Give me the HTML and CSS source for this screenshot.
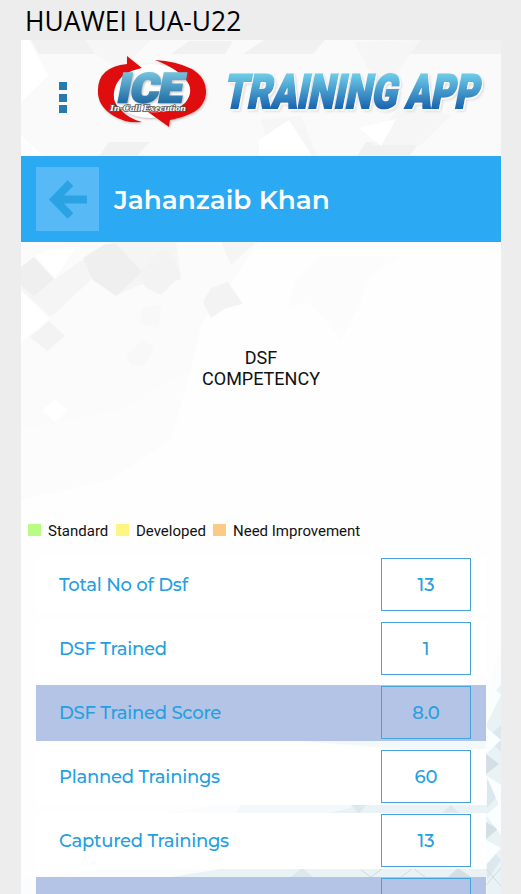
FILE: index.html
```html
<!DOCTYPE html>
<html lang="en">
<head>
<meta charset="utf-8">
<title>Training App</title>
<link rel="stylesheet" href="styles.css">
</head>
<body>
<h1 class="device">HUAWEI LUA-U22</h1>
<main class="screen">
  <svg class="backdrop" viewBox="0 0 480 854" aria-hidden="true">
    <rect width="480" height="854" fill="#fefefe"/>
    <path fill="#fafafa" d="M8 0H480V116H22L0 95V62L27 36Z"/>
    <path fill="#f1f1f1" d="M10 0H65L74 14H18ZM243 0H304L292 14H222ZM168 1H212L204 14H150ZM400 0H480V14H386ZM88 102H129L116 116H78ZM345 102H399L388 116H336Z"/>
    <path fill="#f6f6f6" d="M333 2L399 0L368 45L346 27ZM240 80L280 76L296 116H250ZM74 14L65 0H130L100 30ZM380 65L430 75L400 105L350 105Z"/>
    <path fill="#fff" d="M238 100L268 80L291 116H238ZM0 0H8L27 36L0 62ZM338 88L375 79L360 106Z"/>
    <path fill="#fbfbfb" d="M0 202H238L204 252L180 285L170 330L100 370L0 390Z"/>
    <path fill="#fcfcfc" d="M0 390L100 370L170 330L150 400L90 440L0 460ZM275 240L300 216H380L350 235L340 260L320 300L300 275L285 262L265 270Z"/>
    <path fill="#f5f5f5" d="M13 217L33 240L55 224L92 202H155L160 240L118 245L95 256L75 235L30 277L0 250ZM200 202H236L210 225Z"/>
    <path fill="#efefef" d="M0 227L13 217L33 239L13 256L0 246ZM62 218L84 204H95L121 232L95 256L72 240Z"/>
    <path fill="#f3f3f3" d="M9 297L28 281L44 296L26 311ZM182 262L190 248L207 242L222 264L205 268L190 278ZM120 232L140 210H147L160 235L140 255L124 247Z"/>
    <path fill="#f8f8f8" d="M105 317L122 300L133 308L123 325L112 326ZM122 268L140 264L138 288L118 283Z"/>
    <path fill="#fff" d="M0 250L28 279L0 302ZM21 370L34 360L47 370L34 382ZM15 216L25 210L55 207L34 238Z"/>
    <path fill="#fafcfd" d="M480 610L465 650V760L480 765ZM120 777L200 765H480V854H0V840L80 830L250 825Z"/>
    <path fill="#f3f8fa" d="M280 701H465V709H380ZM220 765H465L480 640V854H290L330 820H190Z"/>
    <path fill="#e9f2f5" d="M466 660L480 645V854H466ZM340 765H466V773H310ZM200 829H466V837H150Z"/>
    <path fill="#dce8ed" d="M466 740L480 752L466 768ZM466 698L480 685V712ZM466 805L480 820L466 840ZM330 765H345L338 774ZM270 837L281 828L292 837ZM430 765L439 774H420Z"/>
    <path fill="#d3dfe5" d="M465 714L478 724L465 734ZM465 782L477 789L465 799ZM437 828L450 837H427Z"/>
    <path fill="#fbfefe" d="M465 687L480 700L465 714ZM465 735L480 745V770ZM465 775L480 762V795ZM465 800L480 808L465 825ZM465 640L480 655L465 685Z"/>
    <path fill="none" stroke="#c9d5dc" stroke-width=".8" d="M465 845L480 828M465 829L480 846M380 837L392 828L404 837M340 830L350 837L362 828"/>
  </svg>

  <header class="header">
    <svg class="branding" viewBox="0 0 480 116" role="img" aria-label="ICE Training App">
      <defs>
        <linearGradient id="ice" gradientUnits="userSpaceOnUse" x1="0" y1="-30" x2="0" y2="0">
          <stop offset="0" stop-color="#78c4e0"/><stop offset="1" stop-color="#246fa6"/>
        </linearGradient>
        <linearGradient id="app" gradientUnits="userSpaceOnUse" x1="0" y1="-35" x2="0" y2="0">
          <stop offset="0" stop-color="#72d0ea"/><stop offset="1" stop-color="#1c68b1"/>
        </linearGradient>
        <filter id="shadow" x="-10%" y="-10%" width="125%" height="130%"><feDropShadow dx="1" dy="1" stdDeviation=".8" flood-color="#777" flood-opacity=".5"/></filter>
        <filter id="glow" x="-10%" y="-10%" width="125%" height="130%">
          <feDropShadow dx="1" dy="1.5" stdDeviation=".2" flood-color="#fff"/>
          <feDropShadow dx="1" dy="1" stdDeviation=".9" flood-color="#888" flood-opacity=".3"/>
        </filter>
      </defs>
      <path fill="#2879ae" d="M38 42h8v8h-8zM38 54h8v8h-8zM38 65h8v8h-8z"/>
      <g filter="url(#shadow)">
        <ellipse cx="130" cy="51" rx="40" ry="27" fill="#fff"/>
        <path fill="#df0710" d="M106 16L121 28Q101 32 95 45Q89 60 99 69Q108 79 121 82Q105 84 91 75Q76 65 77 50Q77 27 106 24Z"/>
        <path fill="#df0710" d="M134 20Q155 21 171 29Q186 38 185 54Q183 70 164 76Q155 79 149 80L148 87L127 72Q153 74 164 63Q174 51 165 40Q157 29 134 20Z"/>
      </g>
      <g class="logo-ice" filter="url(#shadow)">
        <text transform="translate(95 61.500) skewX(-11)" textLength="65" lengthAdjust="spacingAndGlyphs">ICE</text>
      </g>
      <text class="logo-caption" x="89" y="71" textLength="76" lengthAdjust="spacingAndGlyphs">In-Call Execution</text>
      <g class="logo-app" filter="url(#glow)">
        <text transform="translate(202 67.500) skewX(-11)" textLength="173" lengthAdjust="spacingAndGlyphs">TRAINING</text>
        <text transform="translate(384 67.500) skewX(-11)" textLength="73" lengthAdjust="spacingAndGlyphs">APP</text>
      </g>
    </svg>
  </header>

  <div class="titlebar">
    <button class="back" aria-label="Back">
      <svg viewBox="0 0 63 64" width="63" height="64"><path d="M34.500 16L18.500 32.500L34.500 49M20 32.500H51" fill="none" stroke="#2aa3e5" stroke-width="8"/></svg>
    </button>
    <h2 class="name">Jahanzaib Khan</h2>
  </div>

  <section class="chart"><p>DSF<br>COMPETENCY</p></section>

  <ul class="legend">
    <li class="standard">Standard</li>
    <li class="developed">Developed</li>
    <li class="improve">Need Improvement</li>
  </ul>

  <section class="stats">
    <div class="row"><span>Total No of Dsf</span><b>13</b></div>
    <div class="row"><span>DSF Trained</span><b>1</b></div>
    <div class="row score"><span>DSF Trained Score</span><b>8.0</b></div>
    <div class="row"><span>Planned Trainings</span><b>60</b></div>
    <div class="row"><span>Captured Trainings</span><b>13</b></div>
    <div class="row score"><span></span><b></b></div>
  </section>
</main>
</body>
</html>
```
FILE: styles.css
```css
* { box-sizing: border-box; margin: 0; padding: 0; }
html, body { height: 894px; overflow: hidden; }
body { background: #ededed; font-family: Roboto, sans-serif; color: #111; }
.device {
  height: 40px; padding-left: 25px;
  font: 400 26.4px/42px "Open Sans", sans-serif; color: #000; white-space: nowrap;
}
.screen { position: relative; width: 480px; height: 854px; margin-left: 21px; overflow: hidden; }
.backdrop { position: absolute; inset: 0; width: 480px; height: 854px; z-index: -1; }
.header { height: 116px; }
.branding { display: block; width: 480px; height: 116px; overflow: visible; }
.logo-ice text, .logo-app text {
  font-family: Roboto, sans-serif; font-weight: 900;
  stroke-linejoin: miter; paint-order: stroke;
}
.logo-ice text { font-size: 40px; fill: url(#ice); stroke: url(#ice); stroke-width: 2.5px; }
.logo-app text { font-size: 47px; fill: url(#app); stroke: url(#app); stroke-width: 2.2px; }
.logo-caption {
  font: italic 700 9px "Liberation Serif", serif;
  fill: #fff; stroke: #555; stroke-width: 1.5px; paint-order: stroke;
}
.titlebar {
  height: 86px; padding-left: 15px; display: flex; align-items: center; gap: 15px;
  background: #2ba9f3;
}
.back { width: 63px; height: 64px; border: 0; background: #57b9f5; }
.back svg { display: block; }
.name { padding-top: 1px; font: 600 26.3px/40px Montserrat, Inter, sans-serif; color: #fff; white-space: nowrap; }
.chart { height: 278px; padding-top: 105px; text-align: center; }
.chart p { font-size: 18px; line-height: 21px; }
.legend { height: 37px; padding-left: 7px; display: flex; list-style: none; font-size: 15px; line-height: 22px; }
.legend li { display: flex; align-items: flex-start; gap: 7px; white-space: nowrap; }
.legend li::before { content: ""; width: 13px; height: 12px; margin-top: 4px; background: #b8fc83; }
.legend .standard { width: 88px; }
.legend .developed { width: 97px; }
.legend .developed::before { background: #fff583; }
.legend .improve::before { background: #fbca86; }
.stats { padding: 0 15px; display: flex; flex-direction: column; gap: 8px; }
.row {
  flex: none; height: 56px; padding: 1px 15px 0 23px;
  display: flex; align-items: flex-start; justify-content: space-between;
  background: #fff; color: #259fe2;
  font: 500 18px/55px Montserrat, Inter, sans-serif;
}
.row span { letter-spacing: -.25px; }
.row.score { background: #b4c4e6; }
.row b { width: 90px; height: 53px; border: 1px solid #45a2da; font-weight: 500; line-height: 53px; text-align: center; }
```
